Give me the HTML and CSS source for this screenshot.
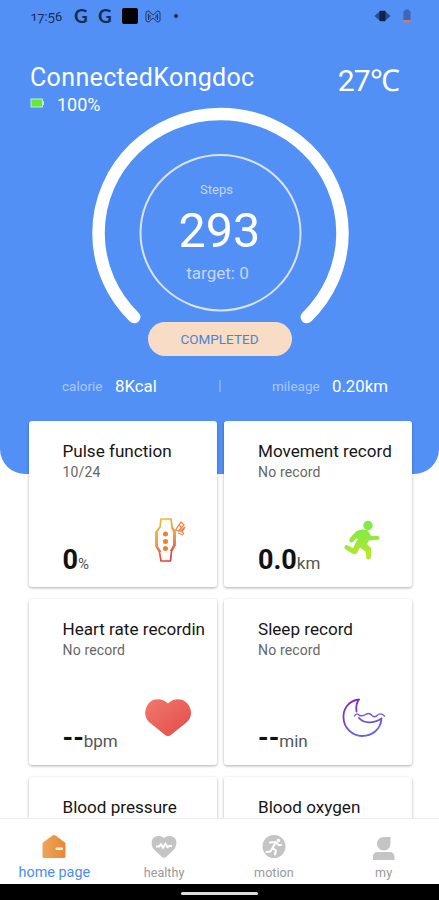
FILE: index.html
```html
<!DOCTYPE html>
<html lang="en">
<head>
    <meta charset="UTF-8">
    <meta name="viewport" content="width=device-width, initial-scale=1.0">
    <title>ConnectedKongdoc</title>
    <link rel="stylesheet" href="styles.css">
</head>
<body>
    <div class="screen">
      <div class="hero">
        <!-- status bar -->
        <div class="status">
          <span class="clock">17:56</span>
          <span class="google">G</span>
          <span class="google">G</span>
          <span class="square"></span>
          <svg class="status-m" width="16" height="13" viewBox="0 0 16 13"><path d="M1 3Q1 1 3 1Q4.500 1 5 2.500L8 5L11 2.500Q11.500 1 13 1Q15 1 15 3V10Q15 12 13 12Q11 12 11 10.500L8 8L5 10.500Q5 12 3 12Q1 12 1 10ZM3.500 3.500V10M12.500 3.500V10M5 5V8.500M11 5V8.500" fill="none" stroke="#1d3568" stroke-width="1"/></svg>
          <span class="dot"></span>
          <svg class="vibrate" width="17" height="12" viewBox="0 0 18 12"><path d="M1 6L5 2.500V9.500ZM17 6L13 2.500V9.500Z" fill="#294b8c" stroke="#294b8c"/><rect x="5.500" y="0.500" width="7" height="11" rx="1.500" fill="#102347"/></svg>
          <svg class="status-battery" width="8" height="14" viewBox="0 0 8 14"><path d="M2 0.500H6V2H7.500V11H0.500V2H2Z" fill="#3d67b4"/><path d="M0.500 11H7.500V13Q4 14 0.500 13Z" fill="#d8736e"/></svg>
        </div>

        <!-- device name and temperature -->
        <div class="device">
          <div>
            <div class="device-name">ConnectedKongdoc</div>
            <div class="battery">
              <svg width="14" height="10" viewBox="0 0 14 10"><rect x="1" y="1" width="11.500" height="8" fill="#66e836" stroke="#b9efd0"/><rect x="12.500" y="3" width="1.500" height="4" fill="#b9efd0"/></svg>
              <span class="battery-text">100%</span>
            </div>
          </div>
          <div class="temp">27℃</div>
        </div>

        <!-- steps ring -->
        <div class="ring">
          <svg class="ring-svg" width="260" height="222" viewBox="0 0 260 222">
            <path d="M44.200 211.100A122 119 0 1 1 216.800 211.100" fill="none" stroke="#fff" stroke-width="12.500" stroke-linecap="round"/>
            <ellipse cx="130.500" cy="126.700" rx="80" ry="77.700" fill="none" stroke="#d9e3f3" stroke-width="2"/>
          </svg>
          <div class="ring-text">
            <span class="steps">Steps</span>
            <span class="count">293</span>
            <span class="target">target: 0</span>
          </div>
        </div>
        <div class="completed">COMPLETED</div>

        <div class="stats">
          <span class="stat-label calorie">calorie</span>
          <span class="stat-value kcal">8Kcal</span>
          <span class="line"></span>
          <span class="stat-label mileage">mileage</span>
          <span class="stat-value">0.20km</span>
        </div>
      </div>

      <!-- cards -->
      <div class="cards">
        <div class="card">
          <div class="title">Pulse function</div>
          <div class="sub">10/24</div>
          <div class="bottom">
            <div class="value"><b>0</b><span class="percent">%</span></div>
            <svg class="icon" width="48" height="48" viewBox="0 0 48 48">
              <defs><linearGradient id="watch" x1="0.300" y1="0" x2="0.600" y2="1"><stop offset="0" stop-color="#e9bd2e"/><stop offset="0.500" stop-color="#ed8a3c"/><stop offset="1" stop-color="#dc3b43"/></linearGradient></defs>
              <g fill="none" stroke="url(#watch)" stroke-width="1.700" stroke-linejoin="round">
                <path d="M17 3H27L28 11L31 16V29L27.500 35L26.500 45H17L15.500 36L12 30V16L16 11Z"/>
                <path d="M16 11L13.500 16V30L17 36M27.500 12L29.500 16V29L26.500 35" stroke-width="0.900"/>
              </g>
              <g fill="#e8822f"><circle cx="21.500" cy="18" r="2.500"/><circle cx="21.500" cy="25.500" r="2.500"/><circle cx="21.500" cy="32.500" r="2.500"/></g>
              <path d="M31.500 14L37 6L40 9L34.500 15ZM35 9L38 12M34 17L39 19M35.500 16L41 11L38 16L40 18" fill="none" stroke="#ed8248" stroke-width="1.300"/>
            </svg>
          </div>
        </div>
        <div class="card">
          <div class="title">Movement record</div>
          <div class="sub">No record</div>
          <div class="bottom">
            <div class="value"><b>0.0</b><span>km</span></div>
            <svg class="icon" width="48" height="48" viewBox="0 0 48 48">
              <defs><linearGradient id="runner" x1="0" y1="0" x2="0.200" y2="1"><stop offset="0" stop-color="#7de946"/><stop offset="1" stop-color="#bce72e"/></linearGradient></defs>
              <circle cx="29" cy="9.500" r="4.700" fill="#85e948"/>
              <path d="M17 15.500Q23 12 29 14.500L32 20L39 20Q41 20.500 40.500 22.500Q40 24 38 24L30 24.500L28 28L32 32Q32.500 35 32 41Q31.500 43.500 29.500 43.500Q27 43.500 27 41V36L21 31.500L18 37Q16 39 13 37.500L6 33Q4.500 31 6 29.500Q7 28.500 9 29.500L14 32L19 22.500L16.500 23L14 26Q12 27 10.500 25.500Q10 24 11 22Z" fill="url(#runner)"/>
            </svg>
          </div>
        </div>
        <div class="card">
          <div class="title">Heart rate recordin</div>
          <div class="sub">No record</div>
          <div class="bottom">
            <div class="value"><b>--</b><span>bpm</span></div>
            <svg class="icon" width="48" height="48" viewBox="0 0 48 48">
              <defs><linearGradient id="heart" x1="0" y1="0" x2="1" y2="1"><stop offset="0" stop-color="#f0796d"/><stop offset="1" stop-color="#e34c49"/></linearGradient></defs>
              <path d="M24 9.500C19 4 9 3.500 4.500 9.500C0 16 0 23 5 28L20.500 40.500Q24 43.500 27.500 40.500L43 28C48.500 23 48 15 43.500 9.500C38.500 3.500 29 4 24 9.500Z" fill="url(#heart)"/>
            </svg>
          </div>
        </div>
        <div class="card">
          <div class="title">Sleep record</div>
          <div class="sub">No record</div>
          <div class="bottom">
            <div class="value"><b>--</b><span>min</span></div>
            <svg class="icon" width="48" height="48" viewBox="0 0 48 48">
              <defs><linearGradient id="moon" x1="0.100" y1="0" x2="0.600" y2="1"><stop offset="0" stop-color="#8a22bd"/><stop offset="1" stop-color="#5d65dc"/></linearGradient></defs>
              <path d="M20 5.500C9 7 4 15 4.500 24C5 34 13 41.500 23 42C33 42 41.500 36 42.500 24.500C34 30 25 29.500 20 24M20 5.500Q16.500 10 17.500 17.500" fill="none" stroke="url(#moon)" stroke-width="1.800" stroke-linecap="round" stroke-linejoin="round"/>
              <path d="M15.500 22Q18 18 20.500 21.500Q24 22.500 27.500 20Q30.500 18.500 33 21.500Q35.500 24 38 21.500Q41.500 18 45.500 22" fill="none" stroke="#7758cf" stroke-width="1.400" stroke-linecap="round"/>
            </svg>
          </div>
        </div>
        <div class="card">
          <div class="title">Blood pressure</div>
        </div>
        <div class="card">
          <div class="title">Blood oxygen</div>
        </div>
      </div>

      <!-- bottom tabs -->
      <div class="tabs">
        <div class="tab active">
          <svg width="28" height="28" viewBox="0 0 28 28"><defs><linearGradient id="home"><stop offset="0" stop-color="#eda655"/><stop offset="1" stop-color="#e8873a"/></linearGradient></defs><path d="M3 9.500L12.500 2.500Q14 1.500 15.500 2.500L25 9.500Q25.500 10 25.500 11V23.500Q25.500 25 24 25H4Q2.500 25 2.500 23.500V11Q2.500 10 3 9.500Z" fill="url(#home)"/><rect x="15.500" y="14.500" width="7.500" height="2.500" rx="1" fill="#fff4df"/></svg>
          <span>home page</span>
        </div>
        <div class="tab">
          <svg width="28" height="28" viewBox="0 0 28 28"><path d="M14 5C10 2 5 2.500 2.500 6C1 10 1.500 14 4.500 17L12 24Q14 25.500 16 24L23.500 17C27 13 27 9 25.500 6C23 2.500 18 2 14 5Z" fill="#c4c4c4"/><path d="M6 13.500H9L11 11.500L13 14.500L15.500 11L17.500 14L19 13H22" fill="none" stroke="#fff" stroke-width="2.200"/></svg>
          <span>healthy</span>
        </div>
        <div class="tab">
          <svg width="28" height="28" viewBox="0 0 28 28"><circle cx="14" cy="13.500" r="11.500" fill="#c4c4c4"/><circle cx="18.500" cy="7.500" r="1.700" fill="#fff"/><path d="M10 9.500L15.500 9L18.500 12H21M15.500 9.500L12.500 15L16 17.500L15 21.500M12.500 15L10.500 18.500L6.500 19" fill="none" stroke="#fff" stroke-width="2" stroke-linecap="round" stroke-linejoin="round"/></svg>
          <span>motion</span>
        </div>
        <div class="tab">
          <svg width="28" height="28" viewBox="0 0 28 28"><path d="M14 4H20.500V10.500A6.800 6.800 0 1 1 14 4ZM3 27V23.500Q3 19 7.500 19H19.500Q24 19 24.500 23.500V27Z" fill="#c4c4c4"/></svg>
          <span>my</span>
        </div>
      </div>
      <div class="system-bar"><span class="handle"></span></div>
    </div>
</body>
</html>
```
FILE: styles.css
```css
body{
  margin: 0;
  background-color: #fff;
  font-family: Roboto, Arial, sans-serif;
}

.screen{
  height: 900px;
  overflow: hidden;
  display: flex;
  flex-direction: column;
}

.screen span{
  white-space: nowrap;
}

/* blue part */
.hero{
  height: 474px;
  flex-shrink: 0;
  box-sizing: border-box;
  background-color: #5290f6;
  border-radius: 0 0 25px 25px;
  color: #fff;
}

.status{
  display: flex;
  align-items: center;
  height: 32px;
  padding: 0 28px 0 30px;
  color: #162b55;
}

.clock{
  width: 44px;
  font-size: 13px;
  font-variant-numeric: oldstyle-nums;
}

.google{
  width: 24px;
  font-size: 19px;
  font-weight: bold;
  font-family: Lato, sans-serif;
  line-height: 32px;
}

.square{
  width: 16px;
  height: 16px;
  border-radius: 2px;
  background-color: #000;
  margin-right: 7px;
}

.dot{
  width: 4px;
  height: 4px;
  border-radius: 50%;
  background-color: #162b55;
  margin-left: 13px;
}

.vibrate{
  margin-left: auto;
  margin-right: 12px;
}

.device{
  display: flex;
  justify-content: space-between;
  height: 76px;
  padding: 30px 40px 0 30px;
  box-sizing: border-box;
}

.device-name{
  font-size: 25px;
  line-height: 31px;
  letter-spacing: 0.35px;
}

.battery{
  display: flex;
  align-items: center;
  height: 24px;
}

.battery svg{
  margin-top: -4px;
}

.battery-text{
  margin-left: 13px;
  font-size: 18px;
  line-height: 24px;
}

.temp{
  font-size: 30px;
  line-height: 38px;
  letter-spacing: -0.8px;
}

/* steps ring */
.ring{
  display: grid;
  width: 260px;
  height: 214px;
  margin: -2px auto 0;
}

.ring-svg,
.ring-text{
  grid-area: 1 / 1;
}

.ring-text{
  display: flex;
  flex-direction: column;
  align-items: center;
  padding-top: 75px;
}

.steps{
  font-size: 13px;
  line-height: 18px;
  color: #c3d7f8;
  margin-right: 6px;
}

.count{
  font-size: 48.5px;
  line-height: 64px;
}

.target{
  font-size: 17px;
  line-height: 20px;
  color: #c3d7f8;
  margin-right: 4px;
}

.completed{
  width: 144px;
  height: 34px;
  margin: 2px auto 0;
  border-radius: 17px;
  background-color: #f8dcc5;
  color: #4a84d8;
  font-size: 13.5px;
  line-height: 35px;
  text-align: center;
}

.stats{
  display: flex;
  align-items: center;
  height: 24px;
  margin-top: 18px;
  padding-left: 62px;
}

.stat-label{
  font-size: 13.5px;
  color: #a9c8fb;
}

.calorie{
  width: 53px;
}

.mileage{
  width: 60px;
}

.stat-value{
  font-size: 16.8px;
}

.kcal{
  width: 104px;
}

.line{
  width: 2px;
  height: 12px;
  background-color: #7eaef9;
  margin-right: 51px;
}

/* cards over the end of the blue part */
.cards{
  display: grid;
  grid-template-columns: 188px 188px;
  grid-auto-rows: 166px;
  gap: 12px 7.5px;
  height: 397px;
  flex-shrink: 0;
  margin-top: -53.5px;
  margin-bottom: 0.5px;
  padding-left: 28.5px;
  overflow: hidden;
}

.card{
  display: flex;
  flex-direction: column;
  box-sizing: border-box;
  padding: 18px 0 0 34px;
  border-radius: 3px;
  background-color: #fff;
  box-shadow: 0 1px 3px rgba(0, 0, 0, 0.32);
}

.title{
  font-size: 17.1px;
  line-height: 24px;
  color: #161616;
  white-space: nowrap;
}

.sub{
  font-size: 14px;
  line-height: 18px;
  color: #666;
  letter-spacing: 0.15px;
}

.bottom{
  display: flex;
  justify-content: space-between;
  flex-grow: 1;
  padding-right: 25px;
}

.value{
  padding-top: 63px;
  font-size: 17px;
  line-height: 32px;
  color: #555;
  white-space: nowrap;
}

.value b{
  font-size: 27px;
  color: #111;
}

.value .percent{
  font-size: 15px;
}

.icon{
  margin-top: 35px;
}

/* bottom tabs */
.tabs{
  display: flex;
  height: 66px;
  flex-shrink: 0;
  box-sizing: border-box;
  border-top: 1px solid #eee;
  background-color: #fff;
}

.tab{
  flex: 1;
  display: flex;
  flex-direction: column;
  align-items: center;
  padding-top: 14px;
  padding-right: 1px;
  font-size: 12.6px;
  line-height: 24px;
  color: #999;
}

.tab svg{
  flex-shrink: 0;
}

.tab.active{
  color: #4a8bf5;
  font-size: 14.4px;
}

.system-bar{
  display: flex;
  justify-content: center;
  height: 16px;
  background-color: #000;
}

.handle{
  width: 77px;
  height: 3px;
  margin-top: 8px;
  border-radius: 2px;
  background-color: #ddd;
}
```
